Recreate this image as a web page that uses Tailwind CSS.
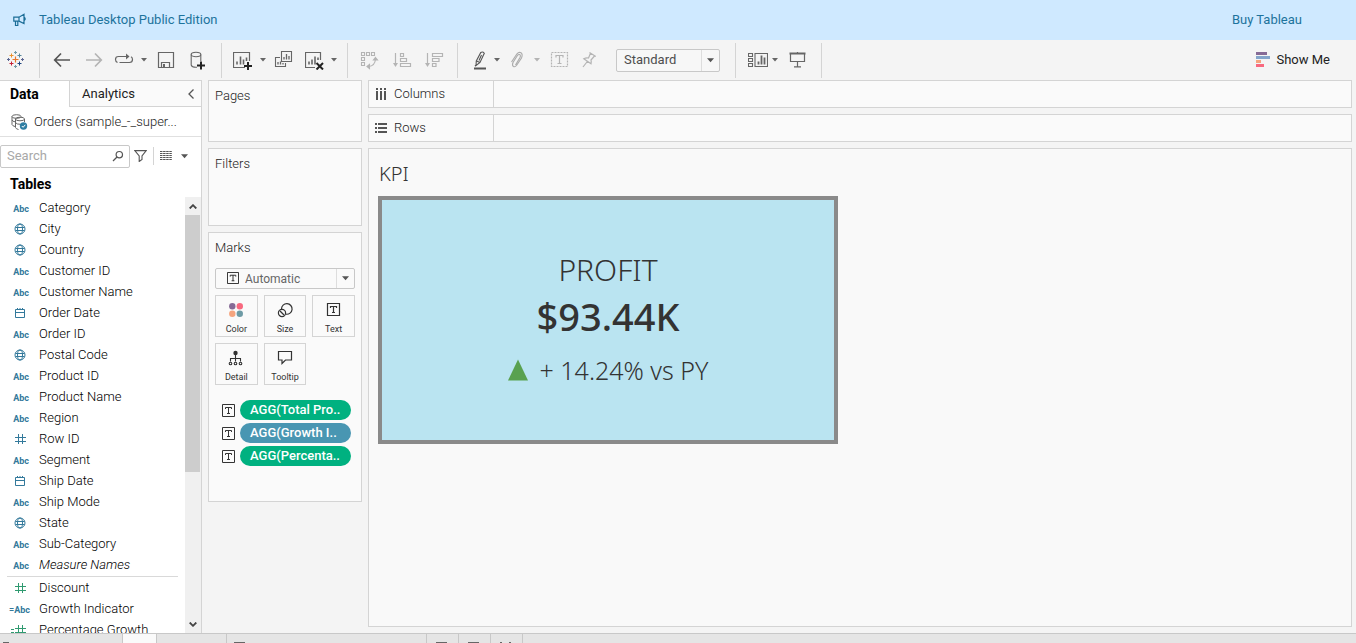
<!DOCTYPE html>
<html lang="en">
<head>
<meta charset="utf-8">
<title>Tableau Desktop Public Edition</title>
<script src="https://cdn.jsdelivr.net/npm/@tailwindcss/browser@4"></script>
</head>
<body class="h-screen flex flex-col overflow-hidden bg-[#f4f4f4] font-['Roboto',sans-serif] font-light text-[13px] leading-4 text-[#222]">

<!-- Shared icons -->
<svg class="hidden" aria-hidden="true">
  <symbol id="caret" viewBox="0 0 6 4"><path d="M0 0h6L3 3.6z" fill="currentColor"/></symbol>
  <symbol id="globe" viewBox="0 0 12 12"><g fill="none" stroke="currentColor"><circle cx="6" cy="6" r="5"/><ellipse cx="6" cy="6" rx="2.500" ry="5"/><path d="M1.500 4.500h9M1.500 7.500h9"/></g></symbol>
  <symbol id="cal" viewBox="0 0 12 12"><path d="M1.500 2.500h9v8h-9zM1.500 5.500h9M3.500 1v2M8.500 1v2M6 1v2" fill="none" stroke="currentColor"/></symbol>
  <symbol id="hash" viewBox="0 0 12 12"><path d="M4.500 1v10M8.500 1v10M1 4.500h11M1 8.500h11" fill="none" stroke="currentColor"/></symbol>
  <symbol id="tbox" viewBox="0 0 13 13"><path d="M.5.5h12v12H.5z" fill="none" stroke="currentColor"/><path d="M3.500 5V3.500h6V5M6.500 3.500v6M5 9.500h3" fill="none" stroke="currentColor"/></symbol>
</svg>

<header class="h-10 shrink-0 flex items-center bg-[#cfe9ff] text-[#1d739c] font-normal pl-3 pr-[54px]">
  <svg class="size-4" viewBox="0 0 16 16" fill="none" stroke="#1b6d97" stroke-width="1.200"><path d="M1.800 5.200H7L12 2.200V11.500L7 9.200H1.800zM7 5.200V9.200M3.500 9.500V13.500H5.800V9.500M12.200 5.300Q14.200 6.800 12.200 8.600"/></svg>
  <span class="ml-[11px] grow">Tableau Desktop Public Edition</span>
  <a href="#">Buy Tableau</a>
</header>

<nav class="h-10 shrink-0 flex items-center pr-[26px] text-[#666] [&_svg]:block [&>button]:shrink-0" aria-label="Toolbar">
  <button class="ml-1.5" aria-label="Start page"><svg class="size-5" viewBox="0 0 20 20" fill="none" stroke-width="1"><path d="M6.500 9.500h6M9.500 6.500v6" stroke="#e8762c" stroke-width="1.200"/><path d="M3.500 5.500h4M5.500 3.500v4" stroke="#eb912b"/><path d="M11.500 5.500h4M13.500 3.500v4" stroke="#59879b"/><path d="M3.500 13.500h4M5.500 11.500v4" stroke="#c72035"/><path d="M11.500 13.500h4M13.500 11.500v4" stroke="#1f447e"/><path d="M8 2.500h3M9.500 1v3M8 16.500h3M9.500 15v3" stroke="#7099a6"/><path d="M1 9.500h3M2.500 8v3M15 9.500h3M16.500 8v3" stroke="#5c6692"/></svg></button>
  <i class="ml-[13px] w-px h-[35px] bg-[#d4d4d4]"></i>
  <button class="ml-3" aria-label="Undo"><svg class="size-5" viewBox="0 0 20 20" fill="none" stroke="#555" stroke-width="1.700"><path d="M18 10H3M9 3.500L2.700 10L9 16.500"/></svg></button>
  <button class="ml-3" aria-label="Redo" disabled><svg class="size-5" viewBox="0 0 20 20" fill="none" stroke="#b4b4b4" stroke-width="1.700"><path d="M2 10H17M11 3.500L17.300 10L11 16.500"/></svg></button>
  <button class="ml-2.5" aria-label="Replay"><svg class="size-5" viewBox="0 0 20 20" fill="none" stroke="#666" stroke-width="1.200"><path d="M3.500 12.500Q1.500 11.500 1.500 9.500Q1.500 6.500 4.500 6.500H13M17 6.800Q18.500 7.500 18.500 9.500Q18.500 12.500 15.500 12.500H5.500"/><path d="M12 3.500L15.500 6.500L12 9.500z" fill="#666" stroke="none"/></svg></button>
  <button class="ml-[7px]" aria-label="Replay options"><svg class="w-1.5 h-1"><use href="#caret"/></svg></button>
  <button class="ml-[9px]" aria-label="Save"><svg class="size-5" viewBox="0 0 20 20" fill="none" stroke="#666" stroke-width="1.200"><path d="M2.500 2.500h15v15h-15zM5.500 17V12.500h8V17"/><path d="M7 14h2v3H7z" fill="#666" stroke="none"/></svg></button>
  <button class="ml-3" aria-label="New data source"><svg class="size-5" viewBox="0 0 20 20" fill="none" stroke="#666" stroke-width="1.100"><ellipse cx="8" cy="4.500" rx="4.800" ry="2.200"/><path d="M3.200 4.500V15Q4 17.500 9 17.200M12.800 4.500V11"/><path d="M13 11.500v8M9 15.500h8" stroke="#222" stroke-width="2"/></svg></button>
  <i class="ml-[13px] w-px h-[35px] bg-[#d4d4d4]"></i>
  <button class="ml-[11px]" aria-label="New worksheet"><svg class="size-5" viewBox="0 0 20 20" fill="none" stroke="#666" stroke-width="1.200"><path d="M16.500 11V2.500h-16v15H12"/><path d="M4 14.500v-3M7.500 14.500v-8M10.500 14.500v-5M13.500 11V7.500" stroke-width="1.600"/><path d="M15 12v8M11 16h8" stroke="#222" stroke-width="2"/></svg></button>
  <button class="ml-[7px]" aria-label="New worksheet options"><svg class="w-1.5 h-1"><use href="#caret"/></svg></button>
  <button class="ml-2" aria-label="Duplicate"><svg class="size-5" viewBox="0 0 20 20" fill="none" stroke="#666" stroke-width="1.100"><path d="M7.500 1.500h10v10h-10zM6 7.500H1.500v9h10V13"/><path d="M10 9.500V7M12.500 9.500V4M15 9.500V6M4 14.500V12M6.500 14.500V11.500M9 14.500V13" stroke-width="1.300"/></svg></button>
  <button class="ml-[11px]" aria-label="Clear sheet"><svg class="size-5" viewBox="0 0 20 20" fill="none" stroke="#666" stroke-width="1.200"><path d="M15.500 10V2.500h-15v15H10"/><path d="M4 14.500v-3M7 14.500v-5M10 14.500v-8M13 10V7.500" stroke-width="1.600"/><path d="M11.500 13l6.500 6.500M18 13l-6.500 6.500" stroke="#222" stroke-width="2"/></svg></button>
  <button class="ml-1.5" aria-label="Clear options"><svg class="w-1.5 h-1"><use href="#caret"/></svg></button>
  <i class="ml-2.5 w-px h-[35px] bg-[#d4d4d4]"></i>
  <button class="ml-3" aria-label="Swap rows and columns" disabled><svg class="size-5" viewBox="0 0 20 20" fill="none" stroke="#b4b4b4" stroke-width="1.100"><path d="M1.500 2.500h3v3h-3zM6.500 2.500h3v3h-3zM11.500 2.500h3v3h-3zM1.500 7.500h3v3h-3zM1.500 12.500h3v3h-3zM8.500 16.500Q15 16 15.500 9"/><path d="M15.500 7.500l2 2.500h-4zM7 16.500l2.500-2v4z" fill="#b4b4b4"/></svg></button>
  <button class="ml-3" aria-label="Sort ascending" disabled><svg class="size-5" viewBox="0 0 20 20" fill="none" stroke="#b4b4b4" stroke-width="1.200"><path d="M3.500 3v12M8.500 3.500h3v3h-3zM8.500 8.500h6v3h-6zM8.500 13.500h10v3h-10z"/><path d="M1 13h5l-2.500 4z" fill="#b4b4b4" stroke="none"/></svg></button>
  <button class="ml-3" aria-label="Sort descending" disabled><svg class="size-5" viewBox="0 0 20 20" fill="none" stroke="#b4b4b4" stroke-width="1.200"><path d="M3.500 3v12M8.500 3.500h10v3h-10zM8.500 8.500h6.500v3H8.500zM8.500 13.500h3.500v3H8.500z"/><path d="M1 13h5l-2.500 4z" fill="#b4b4b4" stroke="none"/></svg></button>
  <i class="ml-[13px] w-px h-[35px] bg-[#d4d4d4]"></i>
  <button class="ml-[13px]" aria-label="Highlight"><svg class="size-5" viewBox="0 0 20 20" fill="none" stroke="#555" stroke-width="1.100"><path d="M9.800 2.500q2-1.200 3.500.8L9 12.500 5 15.500 5.300 11zM5.500 11l3.500 1.500M4 16l1.500-1.500M10.500 5L8 10.500"/><path d="M3 18.500h12" stroke-width="2"/></svg></button>
  <button class="ml-[3px]" aria-label="Highlight options"><svg class="w-1.5 h-1"><use href="#caret"/></svg></button>
  <button class="ml-[7px]" aria-label="Group" disabled><svg class="size-5" viewBox="0 0 20 20" fill="none" stroke="#aaa" stroke-width="1.100"><path d="M8.500 15L13 7.500Q14 5 12.500 4.500Q11.200 4.300 10.400 5.500L6 12.500Q4.800 15.500 6.500 16.500Q8 17.300 9.500 15.500L14.500 8Q16 4 14 2.700Q11.800 1.700 10 3.800L4.500 12"/></svg></button>
  <button class="ml-[7px] text-[#b4b4b4]" aria-label="Group options" disabled><svg class="w-1.5 h-1"><use href="#caret"/></svg></button>
  <button class="ml-[9px]" aria-label="Show mark labels" disabled><svg class="size-5" viewBox="0 0 20 20" fill="none" stroke="#b4b4b4" stroke-width="1.200"><path d="M2.500 2.500h16v14h-16z" stroke-dasharray="2 1"/><path d="M7 7.500V5.500h7v2M10.500 5.500v8M8.500 13.500h4"/></svg></button>
  <button class="ml-2.5" aria-label="Fix axes" disabled><svg class="size-5" viewBox="0 0 20 20" fill="none" stroke="#b4b4b4" stroke-width="1.200"><path d="M10.500 2.500L16.800 6.500M11.500 3.200L9.500 8Q7 7.500 4.800 8.800L12 13.800Q12.500 11.500 12 10L15.500 6M8.300 11.500L4 17"/></svg></button>
  <span class="relative ml-[17px] w-[104px] h-[23px] shrink-0 flex">
    <select aria-label="Fit" class="appearance-none w-full h-full border border-[#c8c8c8] rounded-[2px] bg-[#f7f7f7] pl-[7px] font-normal text-[#4e4e4e] text-[13px]"><option>Standard</option><option>Fit Width</option><option>Entire View</option></select>
    <span class="pointer-events-none absolute right-px top-px bottom-px w-[18px] border-l border-[#ddd] flex items-center justify-center text-[#555]"><svg class="w-[7px] h-[5px]"><use href="#caret"/></svg></span>
  </span>
  <i class="ml-[15px] w-px h-[35px] bg-[#d4d4d4]"></i>
  <button class="ml-3" aria-label="Show or hide cards"><svg class="size-5" viewBox="0 0 20 20" fill="none" stroke="#666" stroke-width="1.100"><path d="M.5 3.500h4v3h-4zM.5 8.500h4v3h-4zM.5 13.500h4v3h-4zM7 3.500h12.500v13H7z"/><path d="M10.500 14.500v-3M13.500 14.500v-9M16.500 14.500v-7" stroke-width="1.800"/></svg></button>
  <button class="ml-1" aria-label="Card options"><svg class="w-1.5 h-1"><use href="#caret"/></svg></button>
  <button class="ml-2.5" aria-label="Presentation mode"><svg class="size-5" viewBox="0 0 20 20" fill="none" stroke="#666" stroke-width="1.200"><path d="M1.500 3.500h16" stroke-width="2"/><path d="M2.500 4v7.500h14V4M9.500 2v2M9.500 11.500v5M6 16.800h7"/></svg></button>
  <i class="ml-[13px] w-px h-[35px] bg-[#d4d4d4]"></i>
  <button class="ml-auto flex items-center gap-1.5 text-[13px] font-normal text-[#222]">
    <svg class="w-3.5 h-4" viewBox="0 0 14 16"><path fill="#866b96" d="M0 0h11v3H0z"/><path fill="#84a5cb" d="M0 4h14v3H0z"/><path fill="#f5a57f" d="M0 8h5v3H0z"/><path fill="#f8697f" d="M0 12h8v3H0z"/></svg>
    Show Me
  </button>
</nav>

<main class="grow min-h-0 flex">
  <!-- Data pane -->
  <aside class="w-[202px] shrink-0 flex flex-col bg-white border-r border-[#d4d4d4]">
    <div class="h-[27px] shrink-0 flex">
      <button class="w-[69px] pl-2.5 text-left text-[14px] font-bold text-black border-t border-[#d4d4d4]">Data</button>
      <div class="grow flex items-center justify-between border border-r-0 border-[#d4d4d4] bg-[#fafafa] pl-3 pr-[7px]">
        <button class="text-[13px] font-normal text-[#222]">Analytics</button>
        <button aria-label="Collapse pane"><svg class="w-1.5 h-2.5" viewBox="0 0 6 10" fill="none" stroke="#555" stroke-width="1.300"><path d="M5.500.500L1 5l4.500 4.500"/></svg></button>
      </div>
    </div>
    <div class="h-[30px] shrink-0 flex items-center gap-1.5 pl-[11px] border-b border-[#e0e0e0]">
      <svg class="w-[17px] h-4" viewBox="0 0 17 16" fill="none" stroke="#666"><ellipse cx="5.500" cy="2.500" rx="4.500" ry="1.800"/><path d="M1 2.500v8q.5 1.500 3 2M1 6q.5 1.500 3 1.800"/><ellipse cx="9" cy="5" rx="4.500" ry="1.800"/><path d="M4.500 5v8.500q.5 1.500 3 2M4.500 8.500q1 2 5 1.800M13.500 5v3"/><circle cx="12.500" cy="12" r="3.700" fill="#2f7ea3" stroke="none"/><path d="M10.800 12l1.300 1.300 2.200-2.500" stroke="#fff"/></svg>
      <span>Orders (sample_-_super...</span>
    </div>
    <div class="h-[38px] shrink-0 flex items-center text-[#555]">
      <label class="w-[130px] h-[23px] shrink-0 flex items-center border border-[#c8c8c8] rounded-[2px] pl-1.5 pr-[5px]">
        <input aria-label="Search" placeholder="Search" class="min-w-0 grow outline-none font-normal placeholder:text-[#a8a8a8]">
        <svg class="size-3 shrink-0" viewBox="0 0 12 12" fill="none" stroke="#555" stroke-width="1.200"><circle cx="7.300" cy="4.700" r="3.200"/><path d="M5 7L1 11"/></svg>
      </label>
      <button class="ml-1" aria-label="Filter"><svg class="block w-[13px] h-3" viewBox="0 0 13 12" fill="none" stroke="#555" stroke-width="1.100"><path d="M.8.600h11.400L8 6v3.500L5.200 11.500V6z"/></svg></button>
      <i class="ml-1.5 w-px h-[18px] bg-[#d4d4d4]"></i>
      <button class="ml-1.5" aria-label="View"><svg class="block w-3 h-2.5" viewBox="0 0 12 10" stroke="#555"><path d="M0 .500h12M0 2.500h12M0 4.500h12M0 6.500h12M0 8.500h12" stroke-dasharray="2.500 .6"/></svg></button>
      <button class="ml-[9px]" aria-label="View options"><svg class="block w-[7px] h-[5px]"><use href="#caret"/></svg></button>
    </div>
    <h2 class="h-[22px] shrink-0 pl-2.5 pt-px text-[14px] font-bold text-black">Tables</h2>
    <div class="grow min-h-0 flex">
      <div class="grow overflow-hidden text-black [&_li]:h-[21px] [&_li]:flex [&_li]:items-center [&_li]:gap-2 [&_b]:w-[22px] [&_b]:mt-0.5 [&_b]:text-right [&_b]:text-[9px] [&_b]:font-bold [&_b]:text-[#33799b] [&_svg]:size-3">
        <ul class="pl-[9px] pb-px [&_b]:pr-0.5 [&_svg]:ml-[5px] [&_svg]:mr-[5px] [&_svg]:text-[#33799b]">
          <li><b>Abc</b>Category</li>
          <li><svg><use href="#globe"/></svg>City</li>
          <li><svg><use href="#globe"/></svg>Country</li>
          <li><b>Abc</b>Customer ID</li>
          <li><b>Abc</b>Customer Name</li>
          <li><svg><use href="#cal"/></svg>Order Date</li>
          <li><b>Abc</b>Order ID</li>
          <li><svg><use href="#globe"/></svg>Postal Code</li>
          <li><b>Abc</b>Product ID</li>
          <li><b>Abc</b>Product Name</li>
          <li><b>Abc</b>Region</li>
          <li><svg><use href="#hash"/></svg>Row ID</li>
          <li><b>Abc</b>Segment</li>
          <li><svg><use href="#cal"/></svg>Ship Date</li>
          <li><b>Abc</b>Ship Mode</li>
          <li><svg><use href="#globe"/></svg>State</li>
          <li><b>Abc</b>Sub-Category</li>
          <li class="italic"><b class="not-italic">Abc</b>Measure Names</li>
        </ul>
        <hr class="mx-[7px] border-[#d9d9d9]">
        <ul class="pl-[9px] [&_b]:pr-0.5 [&_svg]:mr-[5px] [&_svg]:text-[#2f9a70]">
          <li><svg class="ml-[5px]"><use href="#hash"/></svg>Discount</li>
          <li><b>=Abc</b>Growth Indicator</li>
          <li><svg class="!w-[17px]" viewBox="0 0 17 12" fill="none" stroke="currentColor"><path d="M2 5.500h3M2 8.500h3M9.500 1v10M13.500 1v10M6 4.500h11M6 8.500h11"/></svg>Percentage Growth</li>
        </ul>
      </div>
      <div class="w-4 shrink-0 flex flex-col items-center bg-[#f0f0f0]">
        <button class="h-[18px] shrink-0 flex items-center" aria-label="Scroll up"><svg class="w-2 h-[5px]" viewBox="0 0 8 5" fill="none" stroke="#444" stroke-width="1.800"><path d="M.7 4.500L4 1.200l3.300 3.300"/></svg></button>
        <div class="grow w-full"><div class="h-[64%] w-[15px] bg-[#cdcdcd]"></div></div>
        <button class="h-[17px] shrink-0 flex items-center" aria-label="Scroll down"><svg class="w-2 h-[5px]" viewBox="0 0 8 5" fill="none" stroke="#444" stroke-width="1.800"><path d="M.7.500L4 3.800 7.300.500"/></svg></button>
      </div>
    </div>
  </aside>

  <!-- Shelves and marks card -->
  <div class="w-[166px] shrink-0 px-1.5 flex flex-col gap-1.5 [&>section]:border [&>section]:border-[#d4d4d4] [&>section]:bg-[#fafafa] [&>section]:pl-1.5 [&>section]:pt-[7px] [&>section]:pr-1.5">
    <section class="h-[62px]"><h3 class="font-light">Pages</h3></section>
    <section class="h-[78px]"><h3 class="font-light">Filters</h3></section>
    <section class="h-[270px]">
      <h3 class="font-light">Marks</h3>
      <div class="relative mt-3 h-[21px] flex items-center">
        <select aria-label="Mark type" class="appearance-none w-full h-full border border-[#c8c8c8] rounded-[2px] bg-[#fafafa] pl-[29px] text-[12px] font-normal text-[#666]"><option>Automatic</option><option>Text</option></select>
        <svg class="pointer-events-none absolute left-3 top-1 size-3 text-[#222]"><use href="#tbox"/></svg>
        <span class="pointer-events-none absolute right-px top-px bottom-px w-[18px] border-l border-[#ddd] flex items-center justify-center text-[#555]"><svg class="w-[7px] h-[5px]"><use href="#caret"/></svg></span>
      </div>
      <div class="mt-1.5 grid grid-cols-3 gap-x-1.5 gap-y-1.5 [&>button]:h-[42px] [&>button]:border [&>button]:border-[#d4d4d4] [&>button]:flex [&>button]:flex-col [&>button]:items-center [&>button]:pt-1.5 text-[9px] leading-3 font-normal [&_svg]:size-4 [&_svg]:mb-[5px] [&_svg]:shrink-0 text-[#333]">
        <button><svg viewBox="0 0 16 16"><circle cx="4.300" cy="4.300" r="3.200" fill="#866b96"/><circle cx="11.800" cy="4.300" r="3.200" fill="#f8697f"/><circle cx="4.300" cy="11.800" r="3.200" fill="#f5a57f"/><circle cx="11.800" cy="11.800" r="3.200" fill="#6e9ba5"/></svg>Color</button>
        <button><svg viewBox="0 0 16 16" fill="none" stroke="#333" stroke-width="1.200"><path d="M4.500 7A5.300 5.300 0 1 1 9 12.200"/><circle cx="5" cy="11" r="3.600"/><path d="M3 9l4 4"/></svg>Size</button>
        <button><svg viewBox="0 0 16 16" fill="none" stroke="#333" stroke-width="1.200"><path d="M1.500 1.500h12v12h-12zM4.500 6V4.500h6V6M7.500 4.500v6M6 10.500h3"/></svg>Text</button>
        <button><svg viewBox="0 0 16 16" fill="none" stroke="#333" stroke-width="1.100"><circle cx="7.500" cy="3" r="2.200" fill="#333" stroke="none"/><path d="M7.500 4v7.500M2.500 11.500V8.500h10v3"/><circle cx="2.500" cy="13.500" r="1.300"/><circle cx="7.500" cy="13.500" r="1.300"/><circle cx="12.500" cy="13.500" r="1.300"/></svg>Detail</button>
        <button><svg viewBox="0 0 16 16" fill="none" stroke="#333" stroke-width="1.200"><path d="M1.500 1.500h13v8.500H8.500L5 13.500V10H1.500z"/></svg>Tooltip</button>
      </div>
      <ul class="mt-[15px] flex flex-col gap-[3px] text-[13px] font-medium text-white [&>li]:flex [&>li]:items-center [&>li]:gap-[5px] [&>li]:pl-[7px] [&>li]:pr-1 [&_svg]:size-[13px] [&_svg]:shrink-0 [&_svg]:text-[#333] [&_span]:grow [&_span]:h-5 [&_span]:pt-0.5 [&_span]:pl-2.5 [&_span]:rounded-full [&_span]:whitespace-nowrap">
        <li><svg><use href="#tbox"/></svg><span class="bg-[#00b180]">AGG(Total Pro..</span></li>
        <li><svg><use href="#tbox"/></svg><span class="bg-[#4996b2]">AGG(Growth I..</span></li>
        <li><svg><use href="#tbox"/></svg><span class="bg-[#00b180]">AGG(Percenta..</span></li>
      </ul>
    </section>
  </div>

  <!-- Worksheet -->
  <div class="grow min-w-0 flex flex-col gap-1.5 pr-1 pb-1.5">
    <div class="h-7 shrink-0 flex border border-[#d4d4d4] bg-[#fafafa]">
      <div class="w-[125px] border-r border-[#d4d4d4] flex items-center gap-[7px] pl-1.5"><svg class="w-3 h-3" viewBox="0 0 12 12" fill="#555"><path d="M1 0h2v2H1zM5 0h2v2H5zM9 0h2v2H9zM1 3h2v9H1zM5 3h2v9H5zM9 3h2v9H9z"/></svg>Columns</div>
    </div>
    <div class="h-7 shrink-0 flex border border-[#d4d4d4] bg-[#fafafa]">
      <div class="w-[125px] border-r border-[#d4d4d4] flex items-center gap-[7px] pl-1.5"><svg class="w-3 h-3" viewBox="0 0 12 12" fill="#555"><path d="M0 1h2v2H0zM0 5h2v2H0zM0 9h2v2H0zM3 1h9v2H3zM3 5h9v2H3zM3 9h9v2H3z"/></svg>Rows</div>
    </div>
    <section class="grow border border-[#d4d4d4] bg-[#f9f9f9] pl-[9px] pt-3 font-['Noto_Sans',sans-serif] text-[#333]">
      <h1 class="pl-px text-[20px] leading-[26px] font-light">KPI</h1>
      <div class="mt-[9px] w-[460px] h-[248px] border-4 border-[#8a8a8a] bg-[#bae4f1] flex flex-col items-center justify-center">
        <p class="mt-1 text-[30px] leading-10 font-light">PROFIT</p>
        <p class="mt-0.5 text-[38px] leading-12 font-medium">$93.44K</p>
        <p class="mt-1.5 flex items-center gap-3 text-[25px] leading-12 font-light"><svg class="w-5 h-[22px]" viewBox="0 0 20 22" fill="#59a14f" role="img" aria-label="Up"><path d="M10 .500L20 21.500H0z"/></svg>+ 14.24% vs PY</p>
      </div>
    </section>
  </div>
</main>

<!-- Sheet tabs, cut by the window's lower edge -->
<footer class="h-2.5 shrink-0 flex overflow-hidden border-t border-[#c8c8c8] bg-[#e5e5e5] [&>button]:flex [&>button]:items-end [&>button]:border-r [&>button]:border-[#c8c8c8]">
  <button class="w-[123px] pl-[3px]" aria-label="Data Source"><i class="w-1.5 h-px bg-[#666]"></i></button>
  <button class="w-[34px] bg-[#fafafa]" aria-label="Sheet"></button>
  <button class="w-[70px]" aria-label="Next sheet"></button>
  <button class="w-[200px] pl-[7px]" aria-label="Dashboard"><i class="w-[11px] h-px bg-[#666]"></i></button>
  <button class="w-8 pl-[9px]" aria-label="New worksheet"><i class="w-[11px] h-px bg-[#666]"></i></button>
  <button class="w-8 pl-[9px]" aria-label="New dashboard"><i class="w-[11px] h-px bg-[#666]"></i></button>
  <button class="w-8 pl-[9px] gap-[7px]" aria-label="New story"><i class="w-0.5 h-px bg-[#666]"></i><i class="w-0.5 h-px bg-[#666]"></i></button>
</footer>
</body>
</html>
